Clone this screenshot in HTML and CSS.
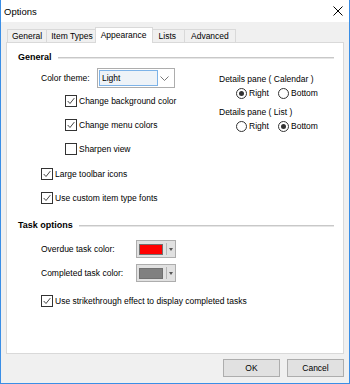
FILE: index.html
```html
<!DOCTYPE html>
<html>
<head>
<meta charset="utf-8">
<link rel="stylesheet" href="styles.css">
</head>
<body>
<div class="window">
  <div class="titlebar">
    <span class="title">Options</span>
    <svg class="close" viewBox="0 0 10 10"><path d="M0.5 0.5 L9.5 9.5 M9.5 0.5 L0.5 9.5" stroke="#000" stroke-width="1" fill="none"/></svg>
  </div>
  <div class="tabs">
    <div class="tab">General</div>
    <div class="tab">Item Types</div>
    <div class="tab active">Appearance</div>
    <div class="tab tab-lists">Lists</div>
    <div class="tab tab-adv">Advanced</div>
  </div>
  <div class="panel">
    <div class="group-head"><span>General</span><span class="rule"></span></div>
    <div class="general">
      <div class="col-left">
        <div class="theme-row">
          <span class="label">Color theme:</span>
          <div class="combo">
            <span class="combo-value">Light</span>
            <svg class="chevron" viewBox="0 0 9 5"><path d="M0.5 0.5 L4.5 4.5 L8.5 0.5" stroke="#777" stroke-width="1" fill="none"/></svg>
          </div>
        </div>
        <div class="check sub"><span class="box"><svg viewBox="0 0 12 12"><path d="M2 6 L4.8 9 L10 2.5" stroke="#333" stroke-width="1.1" fill="none"/></svg></span>Change background color</div>
        <div class="check sub"><span class="box"><svg viewBox="0 0 12 12"><path d="M2 6 L4.8 9 L10 2.5" stroke="#333" stroke-width="1.1" fill="none"/></svg></span>Change menu colors</div>
        <div class="check sub"><span class="box"></span>Sharpen view</div>
        <div class="check first"><span class="box"><svg viewBox="0 0 12 12"><path d="M2 6 L4.8 9 L10 2.5" stroke="#333" stroke-width="1.1" fill="none"/></svg></span>Large toolbar icons</div>
        <div class="check"><span class="box"><svg viewBox="0 0 12 12"><path d="M2 6 L4.8 9 L10 2.5" stroke="#333" stroke-width="1.1" fill="none"/></svg></span>Use custom item type fonts</div>
      </div>
      <div class="col-right">
        <div class="pane-label">Details pane ( Calendar )</div>
        <div class="radios">
          <span class="radio"><span class="dot on"></span>Right</span>
          <span class="radio"><span class="dot"></span>Bottom</span>
        </div>
        <div class="pane-label second">Details pane ( List )</div>
        <div class="radios">
          <span class="radio"><span class="dot"></span>Right</span>
          <span class="radio"><span class="dot on"></span>Bottom</span>
        </div>
      </div>
    </div>
    <div class="group-head task-head"><span>Task options</span><span class="rule"></span></div>
    <div class="task">
      <div class="color-row">
        <span class="label">Overdue task color:</span>
        <div class="color-btn"><span class="swatch red"></span><span class="sep"></span><span class="arrow"></span></div>
      </div>
      <div class="color-row second">
        <span class="label">Completed task color:</span>
        <div class="color-btn"><span class="swatch grey"></span><span class="sep"></span><span class="arrow"></span></div>
      </div>
      <div class="check strike"><span class="box"><svg viewBox="0 0 12 12"><path d="M2 6 L4.8 9 L10 2.5" stroke="#333" stroke-width="1.1" fill="none"/></svg></span>Use strikethrough effect to display completed tasks</div>
    </div>
  </div>
  <div class="footer">
    <button class="btn">OK</button>
    <button class="btn">Cancel</button>
  </div>
</div>
</body>
</html>
```
FILE: styles.css
```css
body {
  margin: 0;
  font-family: "Liberation Sans", Arial, sans-serif;
  font-size: 8.5px;
  color: #000;
}
.window {
  width: 350px;
  height: 384px;
  box-sizing: border-box;
  border: 1px solid #3a8ee6;
  border-top: none;
  background: #f0f0f0;
  display: flex;
  flex-direction: column;
}
.titlebar {
  height: 22px;
  flex: none;
  background: #fff;
  display: flex;
  align-items: center;
  justify-content: space-between;
  padding: 0 6px 0 3px;
}
.title { font-size: 9.5px; }
.close { width: 10px; height: 10px; display: block; }
.tabs {
  height: 20px;
  flex: none;
  display: flex;
  align-items: flex-end;
  padding: 0 6px;
}
.tab {
  height: 13px;
  box-sizing: border-box;
  border: 1px solid #d9d9d9;
  border-bottom: none;
  padding: 0 4px;
  line-height: 12px;
  margin-left: -1px;
  background: #f0f0f0;
  white-space: nowrap;
}
.tab:first-child { margin-left: 0; }
.tab.active {
  height: 16px;
  line-height: 14px;
  background: #fff;
  margin: 0 -2px -1px -3px;
  padding: 0 5px;
  position: relative;
  z-index: 1;
}
.tab-lists { padding: 0 8px; }
.tab-adv { padding: 0 6px; }
.panel {
  flex: none;
  height: 312px;
  box-sizing: border-box;
  margin: 0 5px;
  border: 1px solid #d9d9d9;
  background: #fff;
  padding: 8px 9px 0 11px;
}
.group-head {
  display: flex;
  align-items: center;
  height: 12px;
  font-weight: bold;
  font-size: 9px;
}
.rule {
  flex: 1;
  border-top: 1px solid #c8c8c8;
  border-bottom: 1px solid #e6e6e6;
  margin-left: 6px;
  margin-top: 2px;
}
.general {
  display: flex;
  padding-left: 23px;
  margin-top: 4px;
}
.col-left {
  width: 178px;
  display: flex;
  flex-direction: column;
}
.col-right { margin-top: 5px; }
.theme-row {
  height: 22px;
  display: flex;
  align-items: center;
}
.theme-row .label { width: 56px; }
.combo {
  width: 78px;
  height: 20px;
  box-sizing: border-box;
  border: 1px solid #adadad;
  background: #fff;
  display: flex;
  align-items: center;
  padding: 1px;
}
.combo-value {
  width: 59px;
  height: 16px;
  box-sizing: border-box;
  border: 1px solid #7db3e8;
  background: #eef3f8;
  padding-left: 2px;
  line-height: 14px;
}
.chevron { width: 9px; height: 5px; margin-left: auto; margin-right: 4px; }
.check {
  display: flex;
  align-items: center;
  height: 24px;
  white-space: nowrap;
}
.check.sub { margin-left: 24px; }
.check.first { margin-top: 1px; }
.box {
  width: 12px;
  height: 12px;
  box-sizing: border-box;
  border: 1px solid #333;
  margin-right: 2px;
  flex: none;
  background: #fff;
}
.box svg { display: block; width: 10px; height: 10px; }
.pane-label { height: 14px; line-height: 14px; }
.pane-label.second { margin-top: 5px; }
.radios {
  height: 14px;
  display: flex;
  align-items: center;
  padding-left: 17px;
}
.radio {
  display: flex;
  align-items: center;
  width: 42px;
}
.dot {
  width: 11px;
  height: 11px;
  box-sizing: border-box;
  border: 1px solid #333;
  border-radius: 50%;
  margin-right: 2px;
  display: flex;
  align-items: center;
  justify-content: center;
}
.dot.on::after {
  content: "";
  width: 5px;
  height: 5px;
  border-radius: 50%;
  background: #333;
}
.task-head { margin-top: 9px; }
.task {
  padding-left: 23px;
  margin-top: 8px;
}
.color-row {
  height: 20px;
  display: flex;
  align-items: center;
}
.color-row.second { margin-top: 4px; }
.color-row .label { width: 95px; }
.color-btn {
  width: 40px;
  height: 18px;
  box-sizing: border-box;
  border: 1px solid #adadad;
  background: #e1e1e1;
  display: flex;
  align-items: center;
  padding: 0 2px;
}
.swatch {
  width: 24px;
  height: 11px;
  box-sizing: border-box;
  border: 1px solid #707070;
}
.swatch.red { background: #ff0000; }
.swatch.grey { background: #808080; }
.sep {
  width: 1px;
  height: 12px;
  background: #b5b5b5;
  margin-left: 3px;
}
.arrow {
  width: 0;
  height: 0;
  border-left: 2.5px solid transparent;
  border-right: 2.5px solid transparent;
  border-top: 3px solid #555;
  margin-left: 2px;
}
.check.strike { margin-top: 6px; }
.footer {
  display: flex;
  justify-content: flex-end;
  gap: 7px;
  padding: 5px 5px 0 0;
}
.btn {
  width: 57px;
  height: 18px;
  border: 1px solid #adadad;
  background: #e1e1e1;
  font: inherit;
  color: #000;
  padding: 0;
}
```
